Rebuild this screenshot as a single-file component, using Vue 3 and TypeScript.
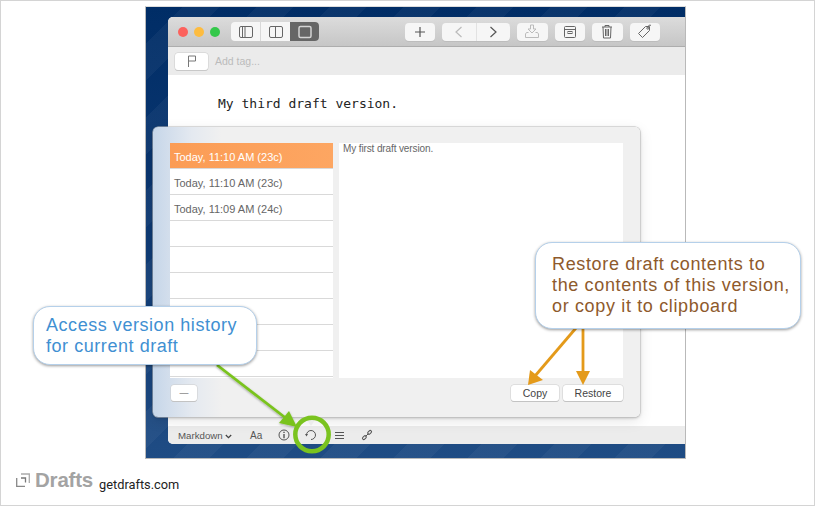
<script setup lang="ts">
const versions = [
  'Today, 11:10 AM (23c)',
  'Today, 11:10 AM (23c)',
  'Today, 11:09 AM (24c)',
  '', '', '', '', '', '',
]
</script>

<template>
  <div class="page">
    <div class="shot">
      <div class="window">
        <header class="titlebar">
          <div class="lights">
            <i class="light red"></i><i class="light yellow"></i><i class="light green"></i>
          </div>
          <div class="seg">
            <span class="seg-item">
              <svg width="16" height="14" viewBox="0 0 16 14" fill="none" stroke="#666"><rect x="1.5" y="1.5" width="13" height="11" rx="1.5"/><path d="M4.5 2v10M7 2v10"/></svg>
            </span>
            <span class="seg-item">
              <svg width="16" height="14" viewBox="0 0 16 14" fill="none" stroke="#666"><rect x="1.5" y="1.5" width="13" height="11" rx="1.5"/><path d="M7.5 2v10"/></svg>
            </span>
            <span class="seg-item on">
              <svg width="16" height="14" viewBox="0 0 16 14" fill="none" stroke="#d4d4d4" stroke-width="1.5"><rect x="2" y="1.5" width="12" height="11" rx="1.5"/></svg>
            </span>
          </div>
          <div class="tools">
            <span class="tool">
              <svg width="14" height="14" viewBox="0 0 14 14" fill="none" stroke="#555" stroke-width="1.2"><path d="M7 2v10M2 7h10"/></svg>
            </span>
            <span class="tool double">
              <span class="half">
                <svg width="10" height="14" viewBox="0 0 10 14" fill="none" stroke="#bbb" stroke-width="1.2"><path d="M7.500 2L2 7l5.500 5"/></svg>
              </span>
              <span class="half">
                <svg width="10" height="14" viewBox="0 0 10 14" fill="none" stroke="#555" stroke-width="1.2"><path d="M2.500 2L8 7l-5.500 5"/></svg>
              </span>
            </span>
            <span class="tool">
              <svg width="16" height="15" viewBox="0 0 16 15" fill="none" stroke="#bbb"><path d="M6.500 1h3v4H12L8 9 4 5h2.500z"/><path d="M4.500 8.500h-2l-1 1.500v3.500h13V10l-1-1.500h-2"/></svg>
            </span>
            <span class="tool">
              <svg width="14" height="14" viewBox="0 0 14 14" fill="none" stroke="#666"><rect x="1.500" y="1.500" width="11" height="11" rx="1"/><path d="M1.500 4.500h11"/><rect x="5" y="6.500" width="4" height="2"/></svg>
            </span>
            <span class="tool">
              <svg width="12" height="15" viewBox="0 0 12 15" fill="none" stroke="#666"><path d="M1 3h10M4 3V1.500h4V3M2 3l.5 11h7L10 3M4.500 5v7M6 5v7M7.500 5v7"/></svg>
            </span>
            <span class="tool">
              <svg width="15" height="15" viewBox="0 0 15 15" fill="none" stroke="#666"><path d="M8.500 2.500h4v4l-7 7-4-4z"/><circle cx="10.800" cy="4.200" r="1"/><path d="M10.800 3.200C11 1.500 13 .5 14 1.500"/></svg>
            </span>
          </div>
        </header>

        <div class="tagbar">
          <span class="flag-btn">
            <svg width="10" height="12" viewBox="0 0 10 12" fill="none" stroke="#777"><path d="M1.500 12V1h7v5h-7"/></svg>
          </span>
          <span class="add-tag">Add tag...</span>
        </div>

        <main class="editor">My third draft version.</main>

        <footer class="statusbar">
          <span class="mode">Markdown
            <svg width="7" height="5" viewBox="0 0 7 5" fill="none" stroke="#444" stroke-width="1.300"><path d="M.8 1l2.700 2.600L6.200 1"/></svg>
          </span>
          <span class="aa">Aa</span>
          <svg class="st info" width="12" height="12" viewBox="0 0 12 12" fill="none" stroke="#555"><circle cx="6" cy="6" r="5"/><path d="M6 2.800v1.200M6 5v4.200" stroke-width="1.400"/></svg>
          <svg class="st undo" width="12" height="12" viewBox="0 0 12 12" fill="none" stroke="#555"><path d="M1.500 6A4.500 4.500 0 1 1 6 10.500"/><path d="M0 5h3L1.500 7.500z" fill="#555" stroke="none"/></svg>
          <svg class="st lines" width="9" height="7" viewBox="0 0 9 7" fill="none" stroke="#555"><path d="M0 .5h9M0 3.500h9M0 6.500h9"/></svg>
          <svg class="st link" width="12" height="12" viewBox="0 0 12 12" fill="none" stroke="#555"><rect x="-2.200" y="-1.300" width="4.400" height="2.600" rx="1.300" transform="translate(3.400 8.600) rotate(-45)"/><rect x="-2.200" y="-1.300" width="4.400" height="2.600" rx="1.300" transform="translate(8.600 3.400) rotate(-45)"/><path d="M4.500 7.500l3-3"/></svg>
        </footer>
      </div>
    </div>

    <section class="sheet">
      <div class="sheet-body">
        <ul class="list">
          <li v-for="(v, i) in versions" :key="i" class="row" :class="{ sel: i === 0 }">{{ v }}</li>
        </ul>
        <div class="detail">My first draft version.</div>
      </div>
      <div class="sheet-foot">
        <button class="btn minus">—</button>
        <button class="btn copy">Copy</button>
        <button class="btn restore">Restore</button>
      </div>
      <i class="pointer"></i>
    </section>

    <svg class="arrows" width="815" height="506" viewBox="0 0 815 506">
      <defs>
        <filter id="sh" x="-20%" y="-20%" width="140%" height="140%">
          <feDropShadow dx="0" dy="1" stdDeviation="1" flood-color="#000" flood-opacity=".35"/>
        </filter>
      </defs>
      <g filter="url(#sh)">
        <path d="M217 365L287 419" stroke="#7ac31f" stroke-width="2.800"/>
        <path d="M297 427L279 423 289 411z" fill="#7ac31f"/>
      </g>
      <circle cx="312" cy="434.500" r="16.700" fill="none" stroke="#7ac31f" stroke-width="4.500"/>
      <path d="M576 328L535 376" stroke="#e49a1a" stroke-width="2.800"/>
      <path d="M528 385L530 370 543 380z" fill="#e49a1a"/>
      <path d="M583 328V374" stroke="#e49a1a" stroke-width="2.800"/>
      <path d="M583 385L576 371H590z" fill="#e49a1a"/>
    </svg>

    <div class="callout blue">Access version history<br>for current draft</div>
    <div class="callout orange">Restore draft contents to<br>the contents of this version,<br>or copy it to clipboard</div>

    <div class="brand">
      <svg width="14" height="14" viewBox="0 0 14 14" fill="none" stroke="#888" stroke-width="1.300"><path d="M5 1h8.300v9" stroke="#aaa"/><path d="M9 13.300H.7V5"/><path d="M5 5h4.500v4.500" stroke="#777"/></svg>
      <span class="brand-name">Drafts</span>
      <span class="brand-url">getdrafts.com</span>
    </div>
  </div>
</template>

<style>
html, body { margin: 0; background: #fff; }
</style>

<style scoped>
.page {
  position: relative;
  box-sizing: border-box;
  width: 815px;
  height: 506px;
  overflow: hidden;
  background: #fff;
  border: 1px solid #d4d4d4;
  padding: 5px 0 0 144px;
  font-family: "Liberation Sans", Arial, sans-serif;
}
.shot {
  box-sizing: border-box;
  width: 541px;
  height: 453px;
  padding: 10px 0 14px 22px;
  background:
    repeating-linear-gradient(135deg, transparent 0 26px, rgba(255,255,255,.04) 26px 52px),
    linear-gradient(180deg, #002d66 0, #0a3670 40%, #1f4c84 100%);
  border: 1px solid #b9b9b9;
  border-top-color: #ddd;
}
.window {
  height: 100%;
  display: flex;
  flex-direction: column;
  background: #fff;
  border-radius: 5px 0 0 5px;
  overflow: hidden;
}
.titlebar {
  height: 30px;
  flex: none;
  display: flex;
  align-items: center;
  box-sizing: border-box;
  padding: 0 25px 0 10px;
  background: linear-gradient(180deg, #dcdcdc, #c6c6c6);
  border-bottom: 1px solid #adadad;
}
.lights { display: flex; gap: 6px; }
.light { width: 10px; height: 10px; border-radius: 50%; }
.red { background: #fc625d; }
.yellow { background: #fdbc40; }
.green { background: #34c84a; }
.seg {
  display: flex;
  margin-left: 11px;
  height: 19px;
  border-radius: 4px;
  overflow: hidden;
  background: #f6f6f6;
}
.seg-item {
  width: 29px;
  display: flex;
  align-items: center;
  justify-content: center;
  border-left: 1px solid #d8d8d8;
}
.seg-item:first-child { border-left: 0; }
.seg-item.on { background: #666; border-left: 0; }
.tools { display: flex; gap: 7px; margin-left: auto; }
.tool {
  box-sizing: border-box;
  width: 30.500px;
  height: 18px;
  display: flex;
  align-items: center;
  justify-content: center;
  background: #f6f6f6;
  border-radius: 4px;
  box-shadow: 0 1px 0 #bdbdbd;
}
.tool.double { width: 68px; }
.half { flex: 1; height: 100%; display: flex; align-items: center; justify-content: center; }
.half + .half { border-left: 1px solid #e2e2e2; }
.tagbar {
  height: 28px;
  flex: none;
  display: flex;
  align-items: center;
  padding-left: 7px;
  gap: 7px;
  background: #ebebeb;
}
.flag-btn {
  box-sizing: border-box;
  width: 33px;
  height: 17px;
  display: flex;
  align-items: center;
  justify-content: center;
  background: #fff;
  border-radius: 3px;
  box-shadow: 0 0 0 .5px #ccc, 0 1px 0 #c4c4c4;
}
.add-tag { font-size: 10.500px; color: #bbb; }
.editor {
  flex: 1;
  padding: 21px 0 0 50px;
  font: 13px/16px "DejaVu Sans Mono", monospace;
  color: #222;
}
.statusbar {
  height: 18px;
  flex: none;
  display: flex;
  align-items: center;
  box-sizing: border-box;
  padding-left: 10px;
  background: #ececec;
  font-size: 9.700px;
  color: #555;
}
.mode { width: 72px; }
.aa { width: 28px; font-size: 10px; }
.st { flex: none; }
.undo { margin-left: 15px; }
.lines { margin-left: 18px; }
.link { margin-left: 17px; }
.sheet {
  position: absolute;
  left: 152px;
  top: 126px;
  box-sizing: border-box;
  width: 487px;
  height: 290px;
  padding: 16px 17px 0 17px;
  background: linear-gradient(90deg, #c6d6e9 0, #e4e9f0 8%, #f0f0f0 14%);
  border-radius: 5px;
  box-shadow: 0 0 0 .5px #bdbdbd, 0 1px 3px rgba(0,0,0,.25), 0 4px 14px rgba(0,0,0,.1);
}
.sheet-body { display: flex; gap: 6px; height: 235px; }
.list {
  width: 163px;
  margin: 0;
  padding: 0;
  list-style: none;
  background: #fff;
  overflow: hidden;
  flex: none;
}
.row {
  box-sizing: border-box;
  height: 26px;
  padding-left: 4px;
  font-size: 11px;
  line-height: 29px;
  color: #666;
  border-bottom: 1px solid #d9d9d9;
  white-space: nowrap;
}
.row.sel { background: linear-gradient(90deg, #fb9c55, #fda662); color: #fff; }
.detail {
  flex: 1;
  background: #fff;
  padding: 0 4px;
  font-size: 10px;
  line-height: 11px;
  letter-spacing: -.12px;
  color: #666;
}
.sheet-foot {
  display: flex;
  gap: 4px;
  margin-top: 7px;
  padding-left: 1px;
}
.btn {
  box-sizing: border-box;
  height: 16px;
  padding: 0;
  border: 0;
  border-radius: 3px;
  background: #fff;
  box-shadow: 0 0 0 .5px #ccc, 0 1px 0 #bbb;
  font: 10.500px/16px "Liberation Sans", Arial, sans-serif;
  color: #444;
}
.minus { width: 26px; margin-right: auto; color: #555; font-size: 9px; }
.copy { width: 48px; }
.restore { width: 60px; }
.pointer {
  position: absolute;
  left: 152px;
  bottom: -9px;
  width: 0;
  height: 0;
  border-left: 6.500px solid transparent;
  border-right: 6.500px solid transparent;
  border-top: 9px solid #ececec;
}
.arrows { position: absolute; left: -1px; top: -1px; pointer-events: none; }
.callout {
  position: absolute;
  box-sizing: border-box;
  background: #fff;
  border: 1px solid #b5d0ea;
  border-radius: 17px;
  box-shadow: 0 1px 3px rgba(0,0,0,.4);
  font-size: 18px;
  line-height: 21px;
  letter-spacing: .55px;
  white-space: nowrap;
}
.blue {
  left: 32px;
  top: 305px;
  width: 224px;
  height: 59px;
  padding: 8px 0 0 12px;
  color: #3f90d2;
}
.orange {
  left: 534px;
  top: 241px;
  width: 266px;
  height: 87px;
  padding: 11px 0 0 16px;
  letter-spacing: .65px;
  color: #8e5a2c;
}
.brand {
  position: absolute;
  left: 15px;
  top: 467px;
  display: flex;
  align-items: center;
}
.brand-name {
  margin-left: 5px;
  font-size: 20.500px;
  font-weight: 700;
  color: #a3a3a3;
  letter-spacing: -.2px;
}
.brand-url {
  margin-left: 6px;
  margin-top: 8px;
  font: 12.800px Roboto, sans-serif;
  color: #222;
}
</style>
